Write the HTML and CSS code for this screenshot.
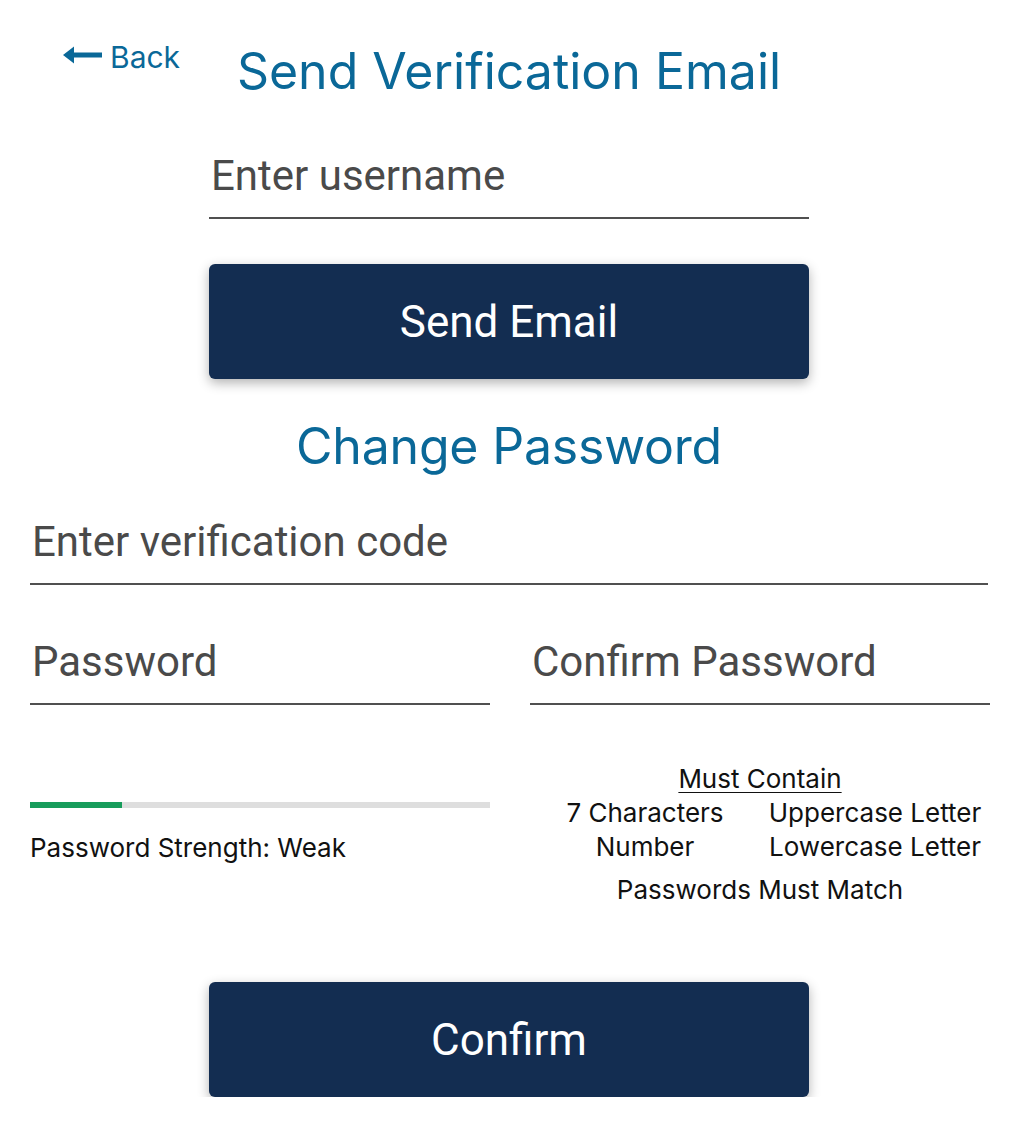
FILE: index.html
```html
<!DOCTYPE html>
<html lang="en">
<head>
<meta charset="utf-8">
<title>Send Verification Email</title>
<link rel="stylesheet" href="styles.css">
</head>
<body>
<div class="page">
  <header class="header">
    <a class="back" href="#">
      <svg class="back-arrow" width="40" height="20" viewBox="0 0 40 20" aria-hidden="true">
        <path d="M0 10 L11 1.5 L11 18.5 Z" fill="currentColor"/>
        <rect x="10" y="7.5" width="29" height="5" fill="currentColor"/>
      </svg>
      <span>Back</span>
    </a>
    <h1 class="title">Send Verification Email</h1>
    <div></div>
  </header>

  <section class="send">
    <input class="field" type="text" placeholder="Enter username">
    <button class="btn send-btn" type="button">Send Email</button>
  </section>

  <h2 class="title subtitle">Change Password</h2>

  <section class="change">
    <input class="field code" type="text" placeholder="Enter verification code">
    <div class="pw-row">
      <input class="field" type="password" placeholder="Password">
      <input class="field" type="password" placeholder="Confirm Password">
    </div>
    <div class="info-row">
      <div class="strength">
        <div class="bar"><div class="bar-fill" style="width:20%"></div></div>
        <p class="strength-text">Password Strength: Weak</p>
      </div>
      <div class="rules">
        <p class="rules-head">Must Contain</p>
        <div class="rules-grid">
          <span>7 Characters</span>
          <span>Uppercase Letter</span>
          <span>Number</span>
          <span>Lowercase Letter</span>
        </div>
        <p class="rules-match">Passwords Must Match</p>
      </div>
    </div>
  </section>

  <div class="confirm-wrap">
    <button class="btn" type="button">Confirm</button>
  </div>
</div>
</body>
</html>
```

FILE: styles.css
```css
* { box-sizing: border-box; }

html, body {
  margin: 0;
  padding: 0;
  background: #ffffff;
}

body {
  font-family: "Inter", "Liberation Sans", sans-serif;
  color: #111;
}

.page {
  width: 1018px;
  padding-top: 40px;
}

.header {
  display: grid;
  grid-template-columns: 1fr auto 1fr;
  align-items: start;
}

.back {
  display: inline-flex;
  align-items: flex-start;
  gap: 7px;
  justify-self: start;
  margin-left: 63px;
  color: #0a6898;
  text-decoration: none;
  font-size: 30px;
  line-height: 34px;
}

.back-arrow {
  margin-top: 5px;
  flex: none;
}

.title {
  margin: 1px 0 0;
  font-family: "Inter", "Liberation Sans", sans-serif;
  font-weight: 400;
  font-size: 50px;
  line-height: 60px;
  color: #0a6898;
  text-align: center;
}

.subtitle {
  margin-top: 37px;
  letter-spacing: -0.2px;
}

.send {
  width: 600px;
  margin: 51px auto 0;
}

.field {
  display: block;
  width: 100%;
  height: 67px;
  margin: 0;
  padding: 0 0 18px 2px;
  border: 0;
  border-bottom: 2px solid #505050;
  border-radius: 0;
  background: transparent;
  font-family: "Roboto", "Liberation Sans", sans-serif;
  font-size: 42px;
  line-height: 47px;
  color: #333;
  outline: none;
}

.field::placeholder {
  color: #4a4a4a;
  opacity: 1;
}

.btn {
  display: block;
  width: 600px;
  height: 115px;
  margin: 0;
  border: 0;
  border-radius: 6px;
  background: #132d51;
  color: #ffffff;
  font-family: "Roboto", "Liberation Sans", sans-serif;
  font-size: 44px;
  box-shadow: 0 4px 12px rgba(0, 0, 0, 0.3);
  cursor: pointer;
}

.send-btn {
  margin-top: 45px;
}

.change {
  width: 960px;
  margin-left: 30px;
  margin-top: 42px;
}

.field.code {
  width: 958px;
}

.pw-row {
  display: grid;
  grid-template-columns: 460px 460px;
  column-gap: 40px;
  margin-top: 53px;
}

.info-row {
  display: grid;
  grid-template-columns: 460px 460px;
  column-gap: 40px;
}

.strength {
  padding-top: 97px;
}

.bar {
  height: 6px;
  background: #dedede;
}

.bar-fill {
  height: 100%;
  background: #179c5b;
}

.strength-text {
  margin: 23px 0 0;
  font-size: 26px;
  line-height: 34px;
  color: #111;
}

.rules {
  padding-top: 57px;
  text-align: center;
  font-size: 26px;
  line-height: 34px;
  color: #111;
}

.rules-head {
  margin: 0;
  text-decoration: underline;
  text-decoration-thickness: 1px;
  text-underline-offset: 4px;
}

.rules-grid {
  display: grid;
  grid-template-columns: 230px 230px;
}

.rules-match {
  margin: 9px 0 0;
}

.confirm-wrap {
  width: 600px;
  margin: 75px auto 0;
}
```
